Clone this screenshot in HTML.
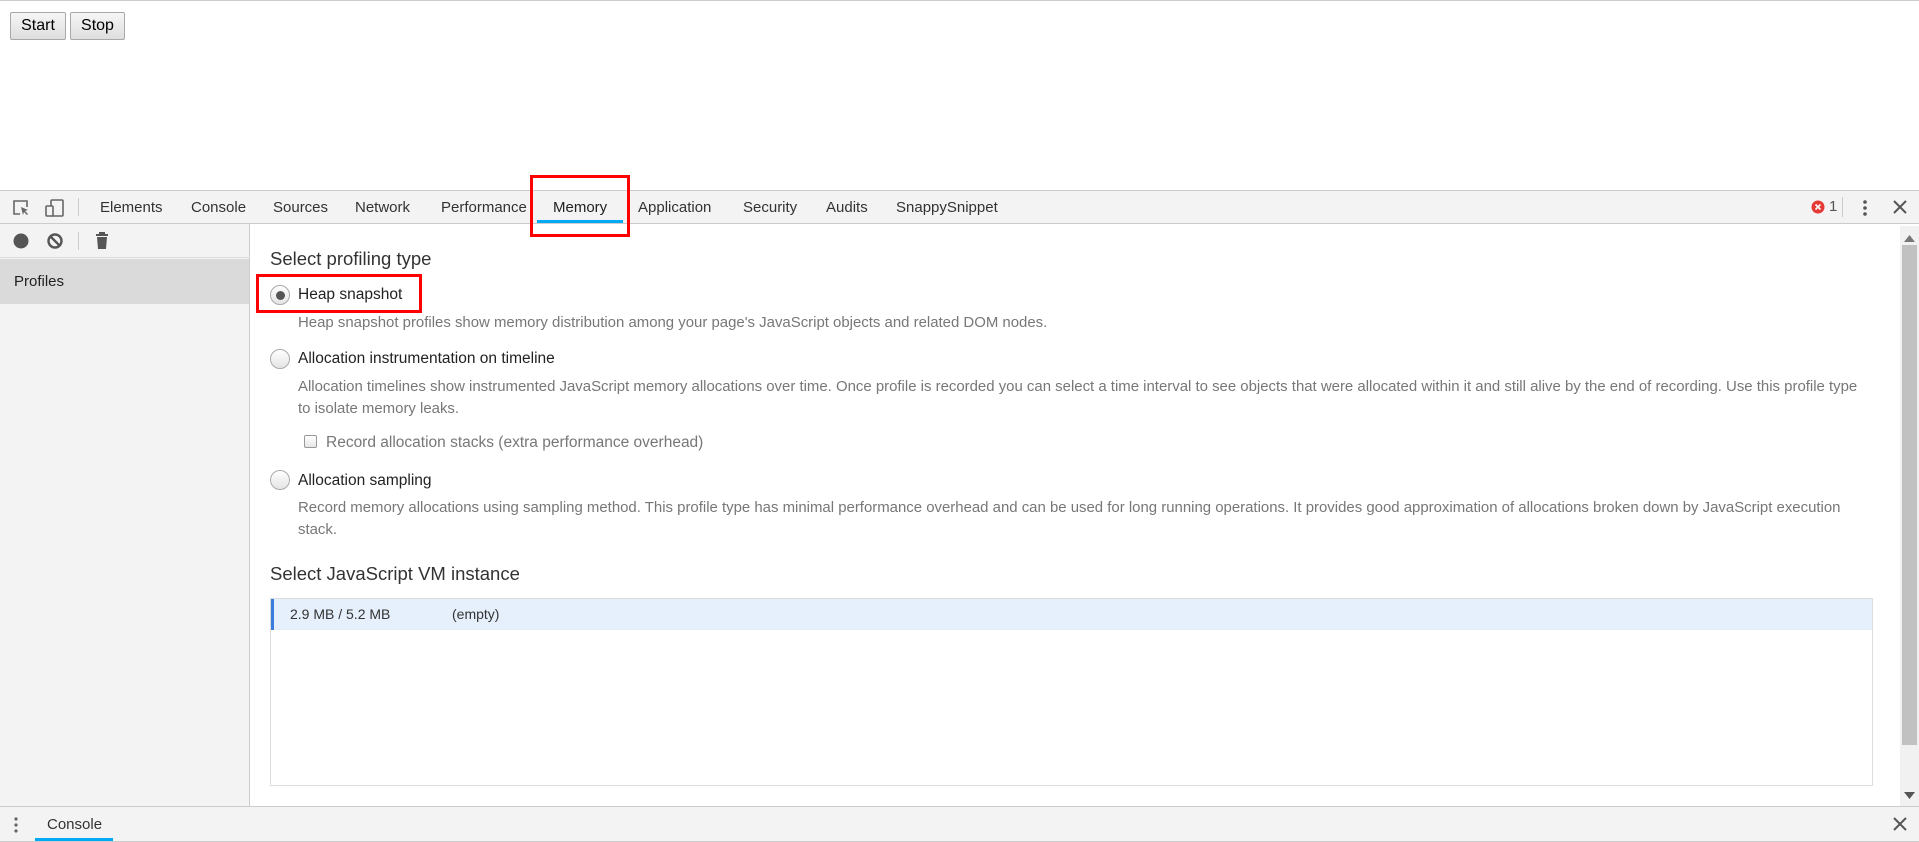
<!DOCTYPE html>
<html><head><style>
*{box-sizing:border-box;margin:0;padding:0}
body{width:1919px;height:842px;position:relative;overflow:hidden;background:#fff;font-family:"Liberation Sans",sans-serif}
.a{position:absolute}
.btn{position:absolute;top:12px;height:28px;border:1px solid #a9a9a9;border-radius:2px;background:linear-gradient(#f6f6f6,#dedede);font-size:16px;line-height:26px;text-align:center;color:#000}
.tab{position:absolute;top:199px;font-size:15px;color:#333}
.gray{color:#777;font-size:14.95px;white-space:nowrap}
.lab{font-size:15.5px;color:#222}
.radio{position:absolute;width:20px;height:20px;border-radius:50%;border:1px solid #aaa;background:linear-gradient(#fff,#e4e4e4)}
</style></head><body>
<div class="a" style="left:0;top:0;width:1919px;height:1px;background:#ccc"></div>
<div class="btn" style="left:10px;width:56px">Start</div>
<div class="btn" style="left:70px;width:55px">Stop</div>

<div class="a" style="left:0;top:190px;width:1919px;height:34px;background:#f3f3f3;border-top:1px solid #ccc;border-bottom:1px solid #ccc"></div>
<svg class="a" style="left:12px;top:199px" width="54" height="18" viewBox="0 0 54 18" fill="none" stroke="#666" stroke-width="1.6">
<path d="M8 15H2V2h13v6"/><path d="M9 8l7 3-3 1 3 3-1 1-3-3-1 3z" fill="#666" stroke="none"/>
<rect x="39" y="1" width="12" height="16" rx="1"/><rect x="34" y="7" width="7" height="10" rx="1" fill="#f3f3f3"/>
</svg>
<div class="a" style="left:78px;top:198px;width:1px;height:18px;background:#ccc"></div>
<div class="tab" style="left:100px">Elements</div>
<div class="tab" style="left:191px">Console</div>
<div class="tab" style="left:273px">Sources</div>
<div class="tab" style="left:355px">Network</div>
<div class="tab" style="left:441px">Performance</div>
<div class="tab" style="left:553px;color:#222">Memory</div>
<div class="tab" style="left:638px">Application</div>
<div class="tab" style="left:743px">Security</div>
<div class="tab" style="left:826px">Audits</div>
<div class="tab" style="left:896px">SnappySnippet</div>
<div class="a" style="left:537px;top:220px;width:86px;height:3px;background:#03a9f4"></div>
<div class="a" style="left:530px;top:175px;width:100px;height:62px;border:3px solid #f00"></div>
<svg class="a" style="left:1811px;top:200px" width="14" height="14"><circle cx="7" cy="7" r="6.5" fill="#e53935"/><path d="M4.5 4.5l5 5M9.5 4.5l-5 5" stroke="#fff" stroke-width="1.6"/></svg>
<div class="a" style="left:1829px;top:198px;font-size:15px;color:#555">1</div>
<div class="a" style="left:1842px;top:197px;width:1px;height:20px;background:#ccc"></div>
<svg class="a" style="left:1861px;top:199px" width="8" height="18"><circle cx="4" cy="3" r="1.8" fill="#555"/><circle cx="4" cy="9" r="1.8" fill="#555"/><circle cx="4" cy="15" r="1.8" fill="#555"/></svg>
<svg class="a" style="left:1893px;top:200px" width="14" height="14"><path d="M1 1l12 12M13 1L1 13" stroke="#555" stroke-width="2"/></svg>

<div class="a" style="left:0;top:224px;width:250px;height:582px;background:#f3f3f3;border-right:1px solid #ccc"></div>
<div class="a" style="left:0;top:257px;width:250px;height:1px;background:#ddd"></div>
<svg class="a" style="left:10px;top:231px" width="115" height="20">
<circle cx="11" cy="10" r="7.5" fill="#555"/>
<circle cx="45" cy="10" r="6.5" fill="none" stroke="#555" stroke-width="2.4"/><path d="M40.5 5.5l9 9" stroke="#555" stroke-width="2.4"/>
<path d="M86 3h12v2H86z M89 1h6v2h-6z M87 6h10l-1 12h-8z" fill="#555"/>
</svg>
<div class="a" style="left:78px;top:232px;width:1px;height:18px;background:#ccc"></div>
<div class="a" style="left:0;top:259px;width:249px;height:45px;background:#dadada"></div>
<div class="a" style="left:14px;top:273px;font-size:15px;color:#222">Profiles</div>

<div class="a" style="left:270px;top:248px;font-size:18.5px;color:#333">Select profiling type</div>
<div class="radio" style="left:270px;top:285px"></div>
<div class="a" style="left:276px;top:291px;width:9px;height:9px;border-radius:50%;background:#555"></div>
<div class="a lab" style="left:298px;top:286px">Heap snapshot</div>
<div class="a" style="left:256px;top:274px;width:166px;height:39px;border:3px solid #f00"></div>
<div class="a gray" style="left:298px;top:314px">Heap snapshot profiles show memory distribution among your page's JavaScript objects and related DOM nodes.</div>
<div class="radio" style="left:270px;top:349px"></div>
<div class="a lab" style="left:298px;top:350px">Allocation instrumentation on timeline</div>
<div class="a gray" style="left:298px;top:376px;line-height:22px">Allocation timelines show instrumented JavaScript memory allocations over time. Once profile is recorded you can select a time interval to see objects that were allocated within it and still alive by the end of recording. Use this profile type<br>to isolate memory leaks.</div>
<div class="a" style="left:304px;top:435px;width:13px;height:13px;border:1px solid #999;border-radius:2px;background:linear-gradient(#fff,#e6e6e6)"></div>
<div class="a" style="left:326px;top:434px;font-size:15.5px;color:#777">Record allocation stacks (extra performance overhead)</div>
<div class="radio" style="left:270px;top:470px"></div>
<div class="a lab" style="left:298px;top:472px">Allocation sampling</div>
<div class="a gray" style="left:298px;top:497px;line-height:22px">Record memory allocations using sampling method. This profile type has minimal performance overhead and can be used for long running operations. It provides good approximation of allocations broken down by JavaScript execution<br>stack.</div>
<div class="a" style="left:270px;top:563px;font-size:18.5px;color:#333">Select JavaScript VM instance</div>
<div class="a" style="left:270px;top:598px;width:1603px;height:188px;border:1px solid #ddd"></div>
<div class="a" style="left:271px;top:599px;width:1601px;height:31px;background:#e6f0fc;border-left:3px solid #3b7ddd"></div>
<div class="a" style="left:290px;top:606px;font-size:14px;color:#333">2.9 MB / 5.2 MB</div>
<div class="a" style="left:452px;top:606px;font-size:14px;color:#333">(empty)</div>

<div class="a" style="left:1900px;top:226px;width:19px;height:580px;background:#f1f1f1"></div>
<svg class="a" style="left:1904px;top:235px" width="11" height="7"><path d="M0 7L5.5 0 11 7z" fill="#777"/></svg>
<div class="a" style="left:1902px;top:245px;width:15px;height:500px;background:#c1c1c1"></div>
<svg class="a" style="left:1904px;top:792px" width="11" height="7"><path d="M0 0L5.5 7 11 0z" fill="#555"/></svg>

<div class="a" style="left:0;top:806px;width:1919px;height:36px;background:#f3f3f3;border-top:1px solid #ccc;border-bottom:1px solid #ccc"></div>
<svg class="a" style="left:12px;top:816px" width="8" height="18"><circle cx="4" cy="3" r="1.6" fill="#666"/><circle cx="4" cy="9" r="1.6" fill="#666"/><circle cx="4" cy="15" r="1.6" fill="#666"/></svg>
<div class="a" style="left:47px;top:816px;font-size:15px;color:#333">Console</div>
<div class="a" style="left:35px;top:838px;width:78px;height:3px;background:#03a9f4"></div>
<svg class="a" style="left:1893px;top:817px" width="14" height="14"><path d="M1 1l12 12M13 1L1 13" stroke="#555" stroke-width="2"/></svg>
</body></html>
